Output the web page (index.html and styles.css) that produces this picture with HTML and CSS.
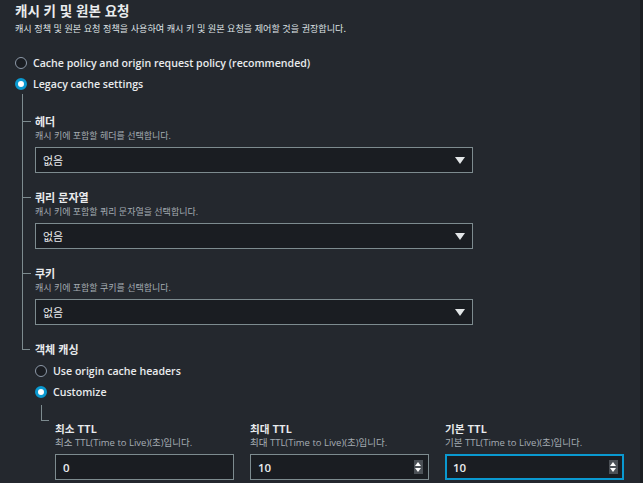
FILE: index.html
```html
<!DOCTYPE html>
<html lang="ko">
<head>
<meta charset="utf-8">
<link rel="stylesheet" href="styles.css">
</head>
<body>
<div class="page">
  <h2 class="title">캐시 키 및 원본 요청</h2>
  <p class="subtitle">캐시 정책 및 원본 요청 정책을 사용하여 캐시 키 및 원본 요청을 제어할 것을 권장합니다.</p>

  <div class="radios">
    <label class="radio"><span class="dot"></span>Cache policy and origin request policy (recommended)</label>
    <label class="radio"><span class="dot checked"></span>Legacy cache settings</label>
  </div>

  <div class="tree">
    <div class="item">
      <div class="label">헤더</div>
      <div class="desc">캐시 키에 포함할 헤더를 선택합니다.</div>
      <div class="select"><span>없음</span><span class="caret"></span></div>
    </div>
    <div class="item">
      <div class="label">쿼리 문자열</div>
      <div class="desc">캐시 키에 포함할 쿼리 문자열을 선택합니다.</div>
      <div class="select"><span>없음</span><span class="caret"></span></div>
    </div>
    <div class="item">
      <div class="label">쿠키</div>
      <div class="desc">캐시 키에 포함할 쿠키를 선택합니다.</div>
      <div class="select"><span>없음</span><span class="caret"></span></div>
    </div>
    <div class="item last">
      <div class="label">객체 캐싱</div>
      <div class="radios sub">
        <label class="radio"><span class="dot"></span>Use origin cache headers</label>
        <label class="radio"><span class="dot checked"></span>Customize</label>
      </div>
      <div class="ttl-group">
        <div class="ttl">
          <div class="label">최소 TTL</div>
          <div class="desc ttl-desc">최소 TTL(Time to Live)(초)입니다.</div>
          <div class="input"><span>0</span></div>
        </div>
        <div class="ttl">
          <div class="label">최대 TTL</div>
          <div class="desc ttl-desc">최대 TTL(Time to Live)(초)입니다.</div>
          <div class="input"><span>10</span><span class="spin"></span></div>
        </div>
        <div class="ttl">
          <div class="label">기본 TTL</div>
          <div class="desc ttl-desc">기본 TTL(Time to Live)(초)입니다.</div>
          <div class="input focus"><span>10</span><span class="spin"></span></div>
        </div>
      </div>
    </div>
  </div>
</div>
</body>
</html>
```

FILE: styles.css
```css
html, body {
  margin: 0;
  padding: 0;
  background: #1b1e22;
  height: 100%;
  overflow: hidden;
}
body {
  font-family: "Open Sans", "Noto Sans CJK KR", sans-serif;
  color: #e9ebed;
}
.page {
  width: 640px;
  height: 483px;
  box-sizing: border-box;
  background: #24282e;
  padding: 0 0 0 15px;
}
.title {
  margin: 0;
  font-size: 13.5px;
  line-height: 20px;
  font-weight: 700;
  font-family: "Noto Sans CJK KR", sans-serif;
}
.subtitle {
  margin: 0;
  font-size: 9.1px;
  line-height: 16px;
  color: #dfe2e5;
  font-family: "Noto Sans CJK KR", sans-serif;
}
.radios {
  margin-top: 16px;
  display: flex;
  flex-direction: column;
}
.radio {
  display: flex;
  align-items: center;
  gap: 6px;
  height: 21px;
  font-size: 10.6px;
  font-weight: 600;
  color: #e9ebed;
}
.dot {
  width: 12px;
  height: 12px;
  box-sizing: border-box;
  border-radius: 50%;
  border: 1.5px solid #8d99a8;
  background: #1a1d22;
  flex: none;
}
.dot.checked {
  border: 3.5px solid #0a99d0;
  background: #ffffff;
}
.tree {
  margin-left: 7px;
}
.tree > .item {
  position: relative;
  padding-left: 12px;
  padding-bottom: 17px;
  border-left: 1px solid #7d8b8f;
}
.tree > .item:first-child {
  padding-top: 20px;
}
.tree > .item::before {
  content: "";
  position: absolute;
  left: 0;
  top: 7px;
  width: 8px;
  border-top: 1px solid #7d8b8f;
}
.tree > .item:first-child::before {
  top: 27px;
}
.tree > .item.last {
  border-left: none;
  padding-left: 13px;
  padding-bottom: 0;
}
.tree > .item.last::before {
  top: 0;
  left: 0;
  width: 7px;
  height: 7px;
  border-top: none;
  border-left: 1px solid #7d8b8f;
  border-bottom: 1px solid #7d8b8f;
}
.label {
  font-family: "Noto Sans CJK KR", sans-serif;
  font-size: 11px;
  font-weight: 700;
  line-height: 15px;
  color: #e9ebed;
}
.ttl .label {
  font-size: 10.6px;
}
.desc {
  font-family: "Open Sans", "Noto Sans CJK KR", sans-serif;
  font-size: 9px;
  line-height: 14px;
  color: #a4acb3;
  margin-bottom: 4px;
}
.desc.ttl-desc {
  font-size: 9.5px;
}
.select {
  width: 438px;
  height: 26px;
  box-sizing: border-box;
  border: 1px solid #7d8b8f;
  background: #1a1d22;
  display: flex;
  align-items: center;
  justify-content: space-between;
  padding: 0 7px 0 7px;
  font-family: "Noto Sans CJK KR", sans-serif;
  font-size: 11px;
  color: #e9ebed;
}
.caret {
  width: 0;
  height: 0;
  border-left: 5px solid transparent;
  border-right: 5px solid transparent;
  border-top: 7px solid #e3e6e8;
}
.radios.sub {
  margin-top: 3px;
}
.ttl-group {
  position: relative;
  margin-top: 19px;
  padding-left: 20px;
  display: grid;
  grid-template-columns: 179px 179px 179px;
  column-gap: 16px;
}
.ttl-group::before {
  content: "";
  position: absolute;
  left: 6px;
  top: -16px;
  width: 7px;
  height: 15px;
  border-left: 1px solid #7d8b8f;
  border-bottom: 1px solid #7d8b8f;
}
.input {
  height: 26px;
  box-sizing: border-box;
  border: 1px solid #7d8b8f;
  background: #1a1d22;
  display: flex;
  align-items: center;
  justify-content: space-between;
  padding: 0 5px 0 7px;
  font-size: 11.5px;
  font-weight: 600;
  color: #e9ebed;
}
.input.focus {
  border: 2px solid #0a99d0;
  padding: 0 4px 0 6px;
}
.spin {
  width: 9px;
  height: 14px;
  background: #4c5157;
  position: relative;
}
.spin::before, .spin::after {
  content: "";
  position: absolute;
  left: 1px;
  border-left: 3.5px solid transparent;
  border-right: 3.5px solid transparent;
}
.spin::before {
  top: 2px;
  border-bottom: 4px solid #ffffff;
}
.spin::after {
  bottom: 2px;
  border-top: 4px solid #ffffff;
}
```
